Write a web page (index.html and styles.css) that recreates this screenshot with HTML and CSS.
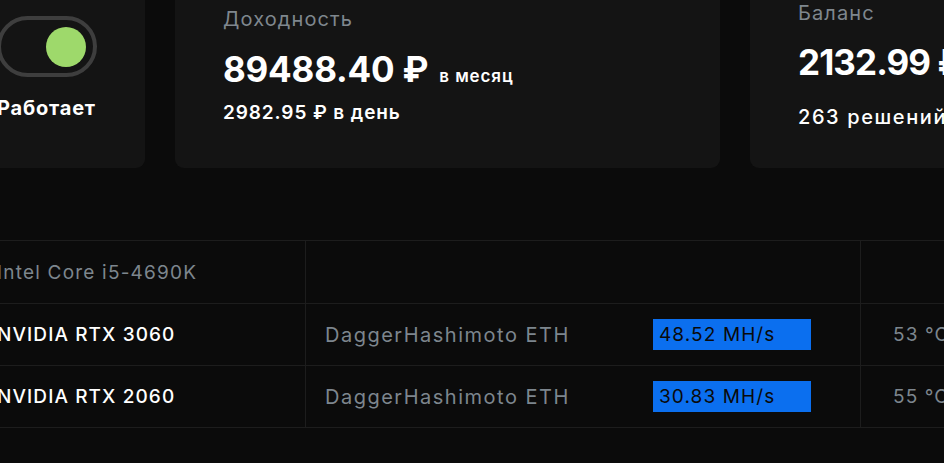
FILE: index.html
```html
<!DOCTYPE html>
<html lang="ru">
<head>
<meta charset="utf-8">
<title>Майнер</title>
<link rel="stylesheet" href="styles.css">
</head>
<body>
<div class="page">
  <section class="cards">
    <div class="card card-status">
      <div class="toggle"><span class="thumb"></span></div>
      <div class="status">Работает</div>
    </div>
    <div class="card card-income">
      <div class="label">Доходность</div>
      <div class="big">89488.40 ₽ <span class="unit">в месяц</span></div>
      <div class="sub">2982.95 ₽ в день</div>
    </div>
    <div class="card card-balance">
      <div class="label">Баланс</div>
      <div class="big">2132.99 ₽</div>
      <div class="sub">263 решений</div>
    </div>
  </section>

  <section class="devices">
    <div class="row">
      <div class="cell c-name muted">Intel Core i5-4690K</div>
      <div class="cell c-algo"></div>
      <div class="cell c-speed"></div>
      <div class="cell c-temp"></div>
    </div>
    <div class="row">
      <div class="cell c-name">NVIDIA RTX 3060</div>
      <div class="cell c-algo muted">DaggerHashimoto ETH</div>
      <div class="cell c-speed"><span class="speed">48.52 MH/s</span></div>
      <div class="cell c-temp muted">53 °C</div>
    </div>
    <div class="row">
      <div class="cell c-name">NVIDIA RTX 2060</div>
      <div class="cell c-algo muted">DaggerHashimoto ETH</div>
      <div class="cell c-speed"><span class="speed">30.83 MH/s</span></div>
      <div class="cell c-temp muted">55 °C</div>
    </div>
  </section>
</div>
</body>
</html>
```

FILE: styles.css
```css
html, body {
  margin: 0;
  padding: 0;
  overflow: hidden;
  background: #0b0b0b;
}

body {
  font-family: Inter, "Noto Sans", "DejaVu Sans", sans-serif;
  color: #ffffff;
}

.page {
  width: 1400px;
  margin-left: -25px;
}

.cards {
  display: flex;
  gap: 30px;
  margin-top: -20px;
}

.card {
  background: #141414;
  border-radius: 9px;
  height: 188px;
  box-sizing: border-box;
}

.card-status {
  width: 170px;
  padding: 36px 0 0 22px;
}

.toggle {
  width: 100px;
  height: 61px;
  box-sizing: border-box;
  border: 4px solid #3e3e3e;
  border-radius: 31px;
  display: flex;
  align-items: center;
  justify-content: flex-end;
  padding: 0 7px;
}

.thumb {
  width: 40px;
  height: 40px;
  border-radius: 50%;
  background: #9ed96b;
}

.status {
  margin-top: 19px;
  font-size: 20px;
  line-height: 24px;
  font-weight: 700;
  letter-spacing: 0.8px;
}

.card-income,
.card-balance {
  width: 545px;
  padding-left: 48px;
}

.card-income {
  padding-top: 27px;
}

.card-balance {
  padding-top: 21px;
}

.label {
  color: #7f878e;
  font-size: 20px;
  line-height: 24px;
  letter-spacing: 1.1px;
}

.big {
  font-size: 35px;
  line-height: 42px;
  font-weight: 700;
  letter-spacing: -0.2px;
  margin-top: 17px;
}

.unit {
  font-size: 17px;
  font-weight: 600;
  letter-spacing: 0.9px;
  margin-left: 3px;
}

.sub {
  font-size: 19px;
  line-height: 22px;
  font-weight: 600;
  letter-spacing: 0.9px;
  margin-top: 5px;
}

.card-balance .big {
  margin-top: 16px;
  letter-spacing: -0.9px;
}

.card-balance .sub {
  margin-top: 23px;
  font-size: 20px;
  font-weight: 500;
  letter-spacing: 1.6px;
}

.devices {
  margin-top: 72px;
  border-top: 1px solid #1d1d1d;
}

.row {
  display: grid;
  grid-template-columns: 331px 328px 227px 1fr;
  height: 62px;
  box-sizing: border-box;
  border-bottom: 1px solid #1d1d1d;
}

.row:first-child {
  height: 63px;
}

.cell {
  display: flex;
  align-items: center;
  font-size: 19px;
  font-weight: 500;
  letter-spacing: 1.1px;
}

.c-name {
  padding-left: 22px;
  border-right: 1px solid #1d1d1d;
}

.c-algo {
  padding-left: 19px;
  font-size: 20px;
  font-weight: 400;
  letter-spacing: 1.5px;
}

.c-speed {
  padding-left: 19px;
  border-right: 1px solid #1d1d1d;
}

.c-temp {
  padding-left: 32px;
  font-weight: 400;
}

.muted {
  color: #7d868e;
}

.c-name.muted {
  font-weight: 400;
  letter-spacing: 1.2px;
}

.speed {
  display: inline-flex;
  align-items: center;
  box-sizing: border-box;
  width: 158px;
  height: 31px;
  padding-left: 6px;
  background: #0b6fef;
  color: #0a0a0a;
  font-weight: 400;
  letter-spacing: 1.1px;
}
```
